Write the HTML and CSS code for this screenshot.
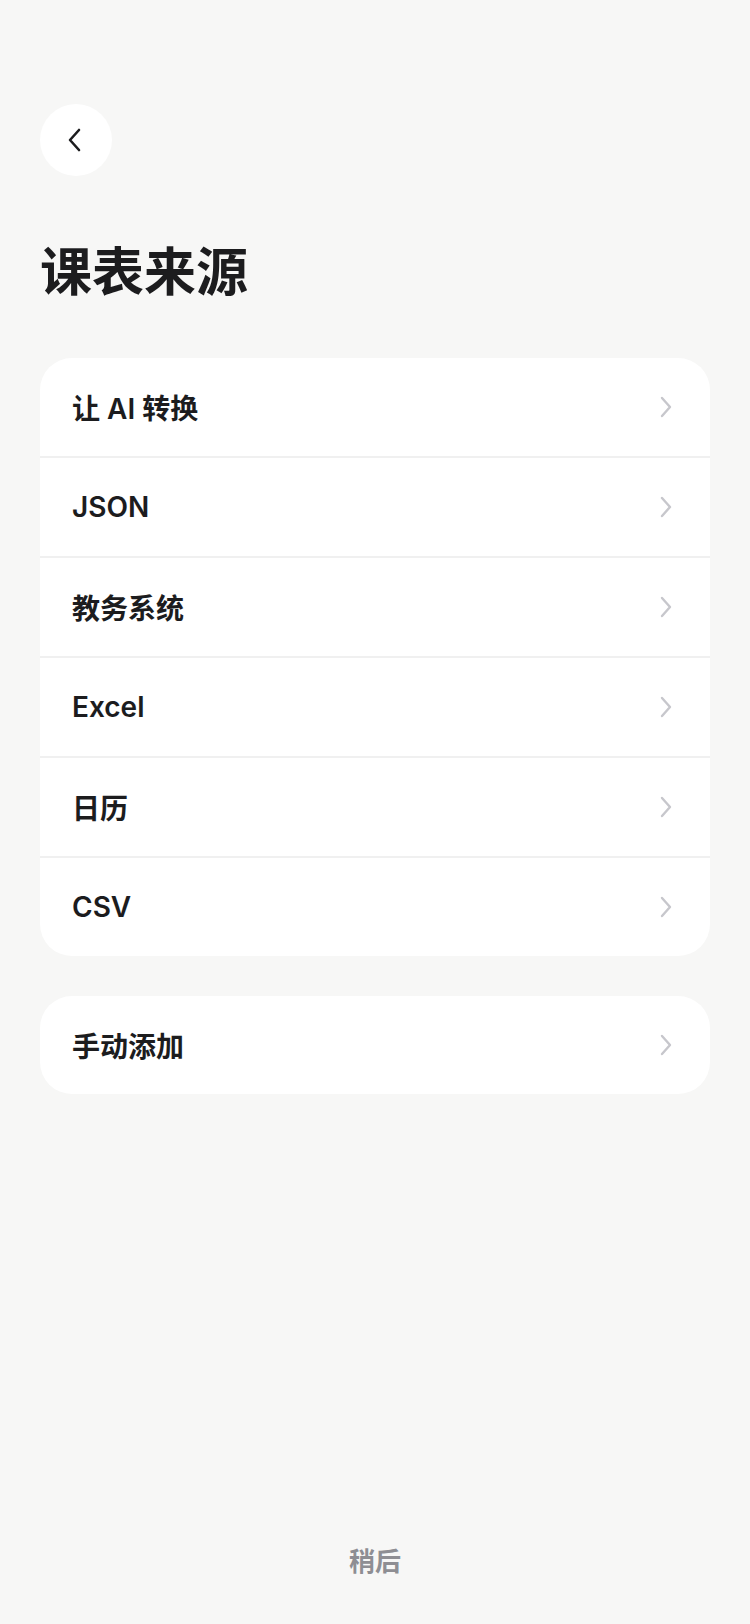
FILE: index.html
```html
<!DOCTYPE html>
<html lang="zh-CN">
<head>
    <meta charset="UTF-8">
    <meta name="viewport" content="width=device-width, initial-scale=1.0">
    <title>课表来源</title>
    <link rel="stylesheet" href="styles.css">
</head>
<body>

    <div class="page">
        <a class="back-btn" href="#">
            <svg width="14" height="24" viewBox="0 0 14 24">
                <path d="M11 2 L2 12 L11 22" fill="none" stroke="#1c1c1e" stroke-width="2.6" stroke-linecap="round" stroke-linejoin="round"/>
            </svg>
        </a>

        <h1 class="title">课表来源</h1>

        <!-- Sources d'import -->
        <div class="card">
            <a class="row" href="#"><span>让 AI 转换</span><svg class="chev" width="14" height="22" viewBox="0 0 14 22"><path d="M3 2 L11 11 L3 20" /></svg></a>
            <a class="row" href="#"><span>JSON</span><svg class="chev" width="14" height="22" viewBox="0 0 14 22"><path d="M3 2 L11 11 L3 20" /></svg></a>
            <a class="row" href="#"><span>教务系统</span><svg class="chev" width="14" height="22" viewBox="0 0 14 22"><path d="M3 2 L11 11 L3 20" /></svg></a>
            <a class="row" href="#"><span>Excel</span><svg class="chev" width="14" height="22" viewBox="0 0 14 22"><path d="M3 2 L11 11 L3 20" /></svg></a>
            <a class="row" href="#"><span>日历</span><svg class="chev" width="14" height="22" viewBox="0 0 14 22"><path d="M3 2 L11 11 L3 20" /></svg></a>
            <a class="row" href="#"><span>CSV</span><svg class="chev" width="14" height="22" viewBox="0 0 14 22"><path d="M3 2 L11 11 L3 20" /></svg></a>
        </div>

        <div class="card card-single">
            <a class="row" href="#"><span>手动添加</span><svg class="chev" width="14" height="22" viewBox="0 0 14 22"><path d="M3 2 L11 11 L3 20" /></svg></a>
        </div>

        <div class="later">稍后</div>
    </div>

</body>
</html>
```

FILE: styles.css
```css
body {
    margin: 0;
    padding: 0;
    background-color: #f7f7f6;
    font-family: 'Inter', 'Noto Sans CJK SC', sans-serif;
    color: #1c1c1e;
}

.page {
    min-height: 100vh;
    box-sizing: border-box;
    padding: 104px 40px 44px;
    display: flex;
    flex-direction: column;
}

.back-btn {
    width: 72px;
    height: 72px;
    border-radius: 50%;
    background-color: #ffffff;
    display: flex;
    align-items: center;
    justify-content: center;
}

.back-btn svg {
    margin-left: -2px;
}

.title {
    margin: 66px 0 54px;
    font-size: 52px;
    line-height: 62px;
    font-weight: 700;
    letter-spacing: 0;
}

.card {
    background-color: #ffffff;
    border-radius: 32px;
    overflow: hidden;
}

.card-single {
    margin-top: 40px;
}

.row {
    height: 98px;
    display: flex;
    align-items: center;
    justify-content: space-between;
    padding: 0 37px 0 32px;
    color: #1c1c1e;
    text-decoration: none;
    font-size: 28px;
    font-weight: 600;
}

.row + .row {
    border-top: 2px solid #f0f0f0;
}

.chev path {
    fill: none;
    stroke: #c7c7cc;
    stroke-width: 2.4;
    stroke-linecap: round;
    stroke-linejoin: round;
}

.later {
    margin-top: auto;
    text-align: center;
    font-size: 26px;
    line-height: 36px;
    font-weight: 600;
    color: #8e8e93;
}
```
